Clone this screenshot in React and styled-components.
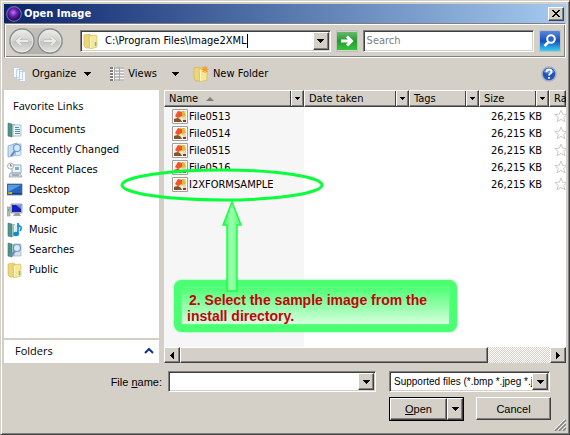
import React from "react";
import styled, { createGlobalStyle, css } from "styled-components";

const face = "#d4d0c8";
const ui = '"DejaVu Sans Condensed", "DejaVu Sans", sans-serif';

const GlobalStyle = createGlobalStyle`
  *, *::before, *::after { box-sizing: border-box; }
  body { margin: 0; background: ${face}; font: 11px/16px ${ui}; color: #000; }
  button, input, select { font: inherit; color: inherit; margin: 0; padding: 0; border: 0; border-radius: 0; background: none; outline: 0; }
  svg { display: block; flex: none; }
  ul { list-style: none; margin: 0; padding: 0; }
`;

const raised = css`
  background: ${face};
  border: 1px solid;
  border-color: #fff #404040 #404040 #fff;
  box-shadow: inset -1px -1px #808080;
`;

const sunken = css`
  background: #fff;
  border: 1px solid;
  border-color: #808080 #fff #fff #808080;
  box-shadow: inset 1px 1px #404040, inset -1px -1px ${face};
`;

const Dialog = styled.div`
  display: flex;
  flex-direction: column;
  min-height: 100vh;
  padding: 3px;
  background: ${face};
  border: 1px solid;
  border-color: ${face} #404040 #404040 ${face};
  box-shadow: inset 1px 1px #fff, inset -1px -1px #808080;
`;

const TitleBar = styled.header`
  display: flex;
  align-items: center;
  height: 19px;
  padding: 0 2px;
  gap: 2px;
  background: linear-gradient(to right, #0a246a, #a6caf0);
`;

const Title = styled.h1`
  flex: 1;
  margin: 0;
  color: #fff;
  font: bold 11px/16px ${ui};
`;

const CloseButton = styled.button`
  ${raised}
  display: grid;
  place-items: center;
  width: 16px;
  height: 14px;
`;

const AddressBar = styled.div`
  display: flex;
  align-items: center;
  gap: 5px;
  height: 35px;
  padding: 0 4px;
  border: 1px solid;
  border-color: #808080 #fff #fff #808080;
  box-shadow: inset 1px 1px #fff, inset -1px -1px #808080;
`;

const Navigation = styled.nav`
  display: flex;
  gap: 2px;
  margin-right: 12px;
  border-radius: 13px;
  background: linear-gradient(#c4c1ba, #b4b1aa);
`;

const RoundButton = styled.button`
  display: block;
  width: 26px;
  height: 26px;
`;

const Combo = styled.div`
  ${sunken}
  display: flex;
  align-items: center;
  flex: ${(p) => p.$grow} 1 0;
  min-width: 0;
  height: ${(p) => p.$height};
  padding: 1px 1px 1px 2px;
`;

const PathInput = styled.input`
  field-sizing: content;
  margin-left: 6px;
  height: 16px;
`;

const Caret = styled.span`
  width: 1px;
  height: 14px;
  background: #000;
`;

const PlainInput = styled.input`
  flex: 1;
  min-width: 0;
  height: 16px;
`;

const Spacer = styled.span`
  flex: 1;
`;

const DropButton = styled.button`
  ${raised}
  display: grid;
  place-items: center;
  flex: none;
  align-self: stretch;
  width: 16px;
`;

const IconButton = styled.button`
  flex: none;
  width: 22px;
  height: 22px;
  display: grid;
  place-items: center;
  border: 1px solid #c0c0bc;
`;

const SearchBox = styled.input`
  ${sunken}
  flex: 165 1 0;
  min-width: 0;
  height: 22px;
  padding: 0 3px;
  &::placeholder { color: #808080; opacity: 1; }
`;

const CommandBar = styled.div`
  display: flex;
  align-items: center;
  height: 32px;
  padding: 0 7px 0 8px;
`;

const Command = styled.button`
  display: flex;
  align-items: center;
  gap: 4px;
  margin-right: ${(p) => p.$after};
`;

const CommandLabel = styled.span`
  margin-right: ${(p) => (p.$wide ? "11px" : "4px")};
`;

const Body = styled.main`
  display: flex;
  flex: 1;
  gap: 5px;
`;

const Sidebar = styled.aside`
  display: flex;
  flex-direction: column;
  gap: 2px;
  width: 155px;
  flex: none;
`;

const Links = styled.nav`
  flex: 1;
  background: #fff;
`;

const LinksTitle = styled.h2`
  margin: 0;
  padding: 8px 9px 5px;
  font: 11px/16px "Open Sans", sans-serif;
`;

const LinkRow = styled.a`
  display: flex;
  align-items: center;
  gap: 6px;
  height: 20px;
  padding: 1px 0 0 3px;
  color: #000;
  text-decoration: none;
`;

const FoldersButton = styled.button`
  display: flex;
  align-items: center;
  justify-content: space-between;
  height: 23px;
  padding: 0 5px 2px 11px;
  background: #fff;
  font: 11px/16px "Open Sans", sans-serif;
`;

const FilePane = styled.section`
  position: relative;
  display: flex;
  flex-direction: column;
  flex: 1;
  min-width: 0;
  background: #fff;
`;

const ListArea = styled.div`
  flex: 1;
  overflow: hidden;
  background: linear-gradient(to right, #f6f6f6 140px, #fff 140px);
`;

const FileTable = styled.table`
  width: 100%;
  table-layout: fixed;
  border-collapse: collapse;
  white-space: nowrap;
  line-height: 15px;
`;

const Col = styled.col`
  width: ${(p) => p.$width};
`;

const HeadCell = styled.th`
  padding: 0;
  height: 17px;
  overflow: hidden;
  font-weight: normal;
  text-align: left;
`;

const HeadInner = styled.div`
  ${raised}
  display: flex;
  align-items: center;
  height: 17px;
  padding-left: 4px;
`;

const SortMark = styled.span`
  margin-left: 8px;
`;

const FilterButton = styled.button`
  display: grid;
  place-items: center;
  width: 13px;
  height: 15px;
  margin-left: auto;
  border-left: 1px solid #404040;
  box-shadow: inset 1px 0 #fff;
`;

const Cell = styled.td`
  height: 17px;
  padding: 1px ${(p) => (p.$right ? "7px" : "0")} 0 0;
  text-align: ${(p) => (p.$right ? "right" : "left")};
  overflow: hidden;
`;

const FileName = styled.div`
  display: flex;
  align-items: center;
  gap: 1px;
  padding-left: 8px;
`;

const Stars = styled.div`
  display: flex;
  padding-left: 5px;
`;

const ScrollBar = styled.div`
  display: flex;
  height: 16px;
  background: repeating-conic-gradient(#fff 0 25%, ${face} 0 50%) 0 0 / 2px 2px;
`;

const ScrollThumb = styled.div`
  ${raised}
  flex: 308 1 0;
`;

const ScrollTrack = styled.div`
  flex: 62 1 0;
`;

const Pointer = styled.svg`
  position: absolute;
  left: -46px;
  top: 75px;
  pointer-events: none;
`;

const Note = styled.p`
  position: absolute;
  left: 10px;
  top: 190px;
  width: 283px;
  margin: 0;
  padding: 12px 8px 8px 13px;
  border-radius: 8px;
  background: #4bff72;
  box-shadow: 0 0 2px #4bff72;
  color: #c80010;
  font: bold 14px/16px "Liberation Sans", Arial, sans-serif;
  text-indent: 2px;
  white-space: nowrap;

  &::before {
    content: "";
    position: absolute;
    inset: 8px;
    background: linear-gradient(#50ff76, #d6ffdd);
    box-shadow: 0 0 2px #8dffa4;
  }
`;

const NoteText = styled.span`
  position: relative;
`;

const Footer = styled.footer`
  display: grid;
  grid-template-columns: 158px 208px 168px;
  column-gap: 6px;
  align-items: center;
  padding: 8px 0 0;
  font: 11px/16px "Liberation Sans", Arial, sans-serif;
`;

const FieldLabel = styled.label`
  justify-self: end;
`;

const TypeBox = styled.div`
  ${sunken}
  display: grid;
  grid-template-columns: 1fr 16px;
  height: 21px;
  margin-left: 7px;
  width: 161px;
  padding: 1px;
  font-size: 10px;
`;

const TypeSelect = styled.select`
  appearance: none;
  grid-row: 1;
  grid-column: 1 / -1;
  min-width: 0;
  padding: 0 16px 0 3px;
  overflow: hidden;
  text-overflow: clip;
`;

const SelectArrow = styled.span`
  ${raised}
  grid-row: 1;
  grid-column: 2;
  display: grid;
  place-items: center;
  pointer-events: none;
`;

const Actions = styled.div`
  grid-column: 3;
  display: flex;
  align-items: flex-start;
  gap: 12px;
  margin: 5px 0 0 7px;
`;

const SplitButton = styled.div`
  display: flex;
  flex: none;
  width: 75px;
  height: 24px;
  border: 1px solid #000;
`;

const PushButton = styled.button`
  ${raised}
  flex: ${(p) => (p.$standalone ? "none" : "1")};
  width: ${(p) => (p.$standalone ? "75px" : "auto")};
  height: ${(p) => (p.$standalone ? "23px" : "22px")};
`;

const GripRow = styled.div`
  display: flex;
  justify-content: flex-end;
  align-items: flex-end;
  height: 10px;
`;

const Down = ({ small }) => (
  <svg width={small ? 5 : 7} height={small ? 3 : 4} viewBox={small ? "1 1 5 3" : "0 0 7 4"} shapeRendering="crispEdges" aria-hidden="true">
    <path d="M0 0h7v1H6v1H5v1H4v1H3V3H2V2H1V1H0z" />
  </svg>
);

const Side = ({ left }) => (
  <svg width="4" height="7" viewBox="0 0 4 7" shapeRendering="crispEdges" aria-hidden="true">
    <path d={left ? "M4 0v7H3V6H2V5H1V4H0V3h1V2h1V1h1V0z" : "M0 0v7h1V6h1V5h1V4h1V3H3V2H2V1H1V0z"} />
  </svg>
);

const NavIcon = ({ forward }) => {
  const arrow = forward ? "M7 13h11M14 9l4 4-4 4" : "M19 13H8M12 9l-4 4 4 4";
  return (
    <svg width="26" height="26" viewBox="0 0 26 26" aria-hidden="true">
      <defs>
        <linearGradient id="disc" x2="0" y2="1">
          <stop offset="0" stopColor="#ececea" />
          <stop offset=".48" stopColor="#d2d2cf" />
          <stop offset=".54" stopColor="#c3c3c0" />
          <stop offset="1" stopColor="#e6e6e2" />
        </linearGradient>
      </defs>
      <circle cx="13" cy="13" r="12" fill="url(#disc)" stroke="#8b8e90" strokeWidth="1.4" />
      <circle cx="13" cy="13" r="10.8" fill="none" stroke="#eee" strokeWidth=".7" />
      <path d={arrow} fill="none" stroke="#bdbdba" strokeWidth="3.4" />
      <path d={arrow} fill="none" stroke="#ebebe9" strokeWidth="2" />
    </svg>
  );
};

const FolderIcon = ({ spark }) => (
  <svg width="16" height="16" viewBox="0 0 16 16" aria-hidden="true">
    <path d="M1 2l5-1 2 1v13H3l-2-2z" fill="#ecd67a" stroke="#cfae49" strokeWidth=".6" />
    <path d="M6 3l7-1 1 1v11l-7 2z" fill="#f7e898" stroke="#d5b44e" strokeWidth=".6" />
    <path d="M7.500 4v11" stroke="#fff6c5" />
    {spark ? (
      <path d="M12 0v7M8.500 3.500h7M9.500 1l5 5M14.500 1l-5 5" stroke="#f39a2c" strokeWidth="1.1" />
    ) : (
      <path d="M12.500 9v4" stroke="#73b6dc" strokeWidth="1.500" />
    )}
  </svg>
);

const Book = () => (
  <>
    <path d="M1 1l4 1v13l-4-1z" fill="#4d958c" stroke="#46706f" strokeWidth=".6" />
    <path d="M5 2h3v12l-3 1z" fill="#9cc2b6" />
  </>
);

const Magnifier = () => (
  <>
    <path d="M8.500 8.500L4 14" stroke="#6d8cb4" strokeWidth="2" />
    <circle cx="10" cy="6" r="3.500" fill="#d6eaff" stroke="#7198c9" strokeWidth="1.200" />
  </>
);

const drawings = {
  documents: (
    <>
      <Book />
      <path d="M6 3h8v11H6z" fill="#eef6fb" stroke="#8ca9ba" strokeWidth=".7" />
      <path d="M8 5.500h4M8 7.500h5M8 9.500h5M8 11.500h5" stroke="#4f91b9" />
    </>
  ),
  changed: (
    <>
      <path d="M1 4l9-3v12l-9 2z" fill="#c6dff5" stroke="#80a8d3" strokeWidth=".8" />
      <path d="M6 2h8v11l-5 1z" fill="#dcebf9" stroke="#94b8df" strokeWidth=".8" />
      <Magnifier />
    </>
  ),
  places: (
    <>
      <path d="M5 3h9v8H5z" fill="#edf5f9" stroke="#9aa9b1" />
      <path d="M3 11h10l2 4H2z" fill="#d4dde1" stroke="#8d999f" strokeWidth=".7" />
      <path d="M8 5h4v3H8z" fill="#7eb2d3" />
      <path d="M5 13h7" stroke="#62839a" />
      <circle cx="3.500" cy="4" r="3" fill="#f2f2f2" stroke="#a0a0a0" strokeWidth=".8" />
      <path d="M3.500 2v2H5" fill="none" stroke="#666" strokeWidth=".8" />
    </>
  ),
  desktop: (
    <>
      <path d="M0 2h15v11H0z" fill="#2465bd" stroke="#52667b" strokeWidth=".7" />
      <path d="M1 3h13L1 10z" fill="#5c9ae0" />
      <path d="M1 11h13v1H1z" fill="#183c69" />
      <path d="M1 10h2v2H1z" fill="#7cb831" />
      <path d="M3 10h2v2H3z" fill="#f6a42c" />
    </>
  ),
  computer: (
    <>
      <path d="M4 2h11v9H4z" fill="#c8cbd0" stroke="#777e88" strokeWidth=".7" />
      <path d="M5 3h9v7H5z" fill="#1720b8" />
      <path d="M9 3h5v4z" fill="#7086ee" />
      <path d="M8 11h4l2 3H6z" fill="#9ca1a8" />
      <path d="M0 5h3v9H0z" fill="#b7bec3" stroke="#838b90" strokeWidth=".6" />
      <path d="M1 7h1v2H1z" fill="#53b34a" />
    </>
  ),
  music: (
    <>
      <Book />
      <path d="M7 3h6v11H7z" fill="#d9edf4" />
      <ellipse cx="9" cy="12" rx="2.800" ry="2.200" fill="#1688cc" />
      <path d="M11 12V1q0 3 3 4 1 2-1 4" fill="none" stroke="#1688cc" strokeWidth="1.600" />
    </>
  ),
  searches: (
    <>
      <Book />
      <path d="M7 2h7v12H7z" fill="#d2e2ea" stroke="#8fa5b1" strokeWidth=".6" />
      <Magnifier />
    </>
  ),
};

const LinkIcon = ({ kind }) =>
  kind === "public" ? (
    <FolderIcon />
  ) : (
    <svg width="16" height="16" viewBox="0 0 16 16" aria-hidden="true">{drawings[kind]}</svg>
  );

const PictureIcon = () => (
  <svg width="16" height="15" viewBox="0 0 16 15" aria-hidden="true">
    <path d="M.5.5h15v14H.5z" fill="#fff" stroke="#a0a0a0" />
    <path d="M2 2h12v11H2z" fill="#efd8a0" />
    <path d="M2 2h6v4L2 10z" fill="#f7efe2" />
    <path d="M3 7l3-5 4 1v4L6 9z" fill="#f4512c" />
    <path d="M10 2h2l2 5-4 1z" fill="#d8bb36" />
    <path d="M2 10l4-1 3 2 2 2H2z" fill="#82552d" />
    <path d="M8 8l2 1 3 3v1h-3z" fill="#e9f2e3" />
    <path d="M11 11h3v2h-3z" fill="#a62b21" />
  </svg>
);

const Star = () => (
  <svg width="14" height="14" viewBox="0 0 14 14" aria-hidden="true">
    <path d="M7 1l1.700 4.200 4.500.3-3.500 2.900 1.200 4.400L7 10.400l-3.900 2.400 1.200-4.400L.8 5.500l4.500-.3z" fill="#fff" stroke="#c8c8c8" />
  </svg>
);

const Callout = () => (
  <>
    <Note>
      <NoteText>
        2. Select the sample image from the
        <br />
        install directory.
      </NoteText>
    </Note>
    <Pointer width="210" height="135" viewBox="0 0 210 135" aria-hidden="true">
      <defs>
        <linearGradient id="shaft">
          <stop offset="0" stopColor="#35f45c" />
          <stop offset=".45" stopColor="#a0ffb0" />
          <stop offset="1" stopColor="#4ff870" />
        </linearGradient>
      </defs>
      <ellipse cx="104" cy="20" rx="100" ry="15" fill="none" stroke="#08ff3c" strokeWidth="3" />
      <path d="M114 37l9 23h-4v66h-10V60h-4z" fill="url(#shaft)" stroke="#1cff46" strokeWidth="1.500" />
    </Pointer>
  </>
);

const links = [
  ["documents", "Documents"],
  ["changed", "Recently Changed"],
  ["places", "Recent Places"],
  ["desktop", "Desktop"],
  ["computer", "Computer"],
  ["music", "Music"],
  ["searches", "Searches"],
  ["public", "Public"],
];

const columns = [
  ["Name", "140px"],
  ["Date taken", "105px"],
  ["Tags", "70px"],
  ["Size", "70px"],
  ["Rating", "auto"],
];

const files = ["File0513", "File0514", "File0515", "File0516", "I2XFORMSAMPLE"];

export default function App() {
  return (
    <>
      <GlobalStyle />
      <Dialog role="dialog" aria-labelledby="title">
        <TitleBar>
          <svg width="16" height="16" viewBox="0 0 16 16" aria-hidden="true">
            <defs>
              <radialGradient id="orb" cx=".45" cy=".4">
                <stop offset="0" stopColor="#c77af0" />
                <stop offset=".5" stopColor="#6a22b4" />
                <stop offset="1" stopColor="#2a0f5c" />
              </radialGradient>
            </defs>
            <circle cx="8" cy="8" r="7.300" fill="url(#orb)" stroke="#6d66a0" strokeWidth="1.200" />
          </svg>
          <Title id="title">Open Image</Title>
          <CloseButton aria-label="Close">
            <svg width="8" height="7" viewBox="0 0 8 7" shapeRendering="crispEdges" aria-hidden="true">
              <path d="M0 0h2v1h1v1h2V1h1V0h2v1H7v1H6v1H5v1h1v1h1v1h1v1H6V6H5V5H3v1H2v1H0V6h1V5h1V4h1V3H2V2H1V1H0z" />
            </svg>
          </CloseButton>
        </TitleBar>

        <AddressBar>
          <Navigation aria-label="History">
            <RoundButton aria-label="Back"><NavIcon /></RoundButton>
            <RoundButton aria-label="Forward"><NavIcon forward /></RoundButton>
          </Navigation>
          <Combo $grow={248} $height="22px">
            <FolderIcon />
            <PathInput aria-label="Address" defaultValue="C:\Program Files\Image2XML" />
            <Caret />
            <Spacer />
            <DropButton aria-label="Previous locations"><Down /></DropButton>
          </Combo>
          <IconButton aria-label="Go">
            <svg width="20" height="18" viewBox="0 0 20 18" aria-hidden="true">
              <defs>
                <linearGradient id="go" x2="0" y2="1">
                  <stop offset="0" stopColor="#69b96b" />
                  <stop offset=".5" stopColor="#249a30" />
                  <stop offset="1" stopColor="#35c43c" />
                </linearGradient>
              </defs>
              <path d="M0 0h20v18H0z" fill="url(#go)" />
              <path d="M4 9h10M10 4.500L14.500 9 10 13.500" fill="none" stroke="#fff" strokeWidth="3" />
            </svg>
          </IconButton>
          <SearchBox type="search" aria-label="Search" placeholder="Search" />
          <IconButton aria-label="Run search">
            <svg width="20" height="20" viewBox="0 0 20 20" aria-hidden="true">
              <defs>
                <linearGradient id="find" x2="0" y2="1">
                  <stop offset="0" stopColor="#5b86dc" />
                  <stop offset=".5" stopColor="#1450c0" />
                  <stop offset="1" stopColor="#39d0f4" />
                </linearGradient>
              </defs>
              <rect width="20" height="20" rx="1" fill="url(#find)" />
              <path d="M8.500 11l-4 4" stroke="#fff" strokeWidth="2.500" />
              <circle cx="11" cy="8" r="3.800" fill="#2463ca" stroke="#fff" strokeWidth="2" />
            </svg>
          </IconButton>
        </AddressBar>

        <CommandBar role="toolbar" aria-label="Commands">
          <Command $after="19px">
            <svg width="16" height="16" viewBox="0 0 16 16" aria-hidden="true">
              <path d="M1.500 1.500h6v10h-6zM4.500 3.500h6v10h-6zM7.500 5.500h6v10h-6z" fill="#f7fbff" stroke="#b4cae0" strokeWidth=".8" />
            </svg>
            <CommandLabel>Organize</CommandLabel>
            <Down />
          </Command>
          <Command $after="14px">
            <svg width="14" height="16" viewBox="0 0 14 16" aria-hidden="true">
              <path d="M0 1h14v14H0z" fill="#f7f7f5" />
              <path d="M4.500 1v14M9.500 1v14" stroke="#aaa" />
              <path d="M0 2h3M0 5h3M0 8h3M0 11h3M0 14h3" stroke="#555" strokeWidth="1.500" />
              <path d="M5 2h4M5 5h4M5 8h4M5 11h4M5 14h4M10 2h4M10 5h4M10 8h4M10 11h4M10 14h4" stroke="#888" />
            </svg>
            <CommandLabel $wide>Views</CommandLabel>
            <Down />
          </Command>
          <Command $after="auto">
            <FolderIcon spark />
            <CommandLabel>New Folder</CommandLabel>
          </Command>
          <RoundButton aria-label="Help">
            <svg width="26" height="26" viewBox="0 0 26 26" aria-hidden="true">
              <circle cx="16" cy="13" r="7" fill="#2454b8" stroke="#a3afc6" strokeWidth="1.500" />
              <path d="M10.500 11a6 5 0 0 1 11 0q-5 3-11 0" fill="#6b92dd" />
              <path d="M13.500 11q0-2.500 2.500-2.500t2.500 2.300q0 1.200-1.300 1.900T16 14.500M16 16v1.800" fill="none" stroke="#fff" strokeWidth="1.800" />
            </svg>
          </RoundButton>
        </CommandBar>

        <Body>
          <Sidebar>
            <Links aria-labelledby="favorites">
              <LinksTitle id="favorites">Favorite Links</LinksTitle>
              <ul>
                {links.map(([kind, label]) => (
                  <li key={kind}>
                    <LinkRow href={`#${kind}`}><LinkIcon kind={kind} />{label}</LinkRow>
                  </li>
                ))}
              </ul>
            </Links>
            <FoldersButton>
              Folders
              <svg width="10" height="6" viewBox="0 0 10 6" aria-hidden="true">
                <path d="M1 5l4-4 4 4" fill="none" stroke="#0a3190" strokeWidth="2" />
              </svg>
            </FoldersButton>
          </Sidebar>

          <FilePane>
            <ListArea>
              <FileTable>
                <colgroup>
                  {columns.map(([name, width]) => <Col key={name} $width={width} />)}
                </colgroup>
                <thead>
                  <tr>
                    {columns.map(([name]) => (
                      <HeadCell key={name} scope="col">
                        <HeadInner>
                          {name}
                          {name === "Name" && (
                            <SortMark>
                              <svg width="8" height="4" viewBox="0 0 8 4" aria-hidden="true">
                                <path d="M0 4l4-4 4 4z" fill="#808080" />
                              </svg>
                            </SortMark>
                          )}
                          {name !== "Rating" && (
                            <FilterButton aria-label={`Filter ${name}`}><Down small /></FilterButton>
                          )}
                        </HeadInner>
                      </HeadCell>
                    ))}
                  </tr>
                </thead>
                <tbody>
                  {files.map((file) => (
                    <tr key={file}>
                      <Cell><FileName><PictureIcon />{file}</FileName></Cell>
                      <Cell />
                      <Cell />
                      <Cell $right>26,215 KB</Cell>
                      <Cell><Stars><Star /></Stars></Cell>
                    </tr>
                  ))}
                </tbody>
              </FileTable>
            </ListArea>
            <ScrollBar>
              <DropButton aria-label="Scroll left"><Side left /></DropButton>
              <ScrollThumb />
              <ScrollTrack />
              <DropButton aria-label="Scroll right"><Side /></DropButton>
            </ScrollBar>
            <Callout />
          </FilePane>
        </Body>

        <Footer>
          <FieldLabel htmlFor="filename">File <u>n</u>ame:</FieldLabel>
          <Combo $grow={1} $height="21px">
            <PlainInput id="filename" />
            <DropButton aria-label="Recent file names"><Down /></DropButton>
          </Combo>
          <TypeBox>
            <TypeSelect aria-label="File type">
              <option>Supported files (*.bmp *.jpeg *.jpg)</option>
            </TypeSelect>
            <SelectArrow aria-hidden="true"><Down /></SelectArrow>
          </TypeBox>
          <Actions>
            <SplitButton>
              <PushButton><u>O</u>pen</PushButton>
              <DropButton aria-label="Open options"><Down /></DropButton>
            </SplitButton>
            <PushButton $standalone>Cancel</PushButton>
          </Actions>
        </Footer>
        <GripRow>
          <svg width="12" height="12" viewBox="0 0 12 12" aria-hidden="true">
            <path d="M1 12L12 1M5 12l7-7M9 12l3-3" stroke="#808080" strokeWidth="1.500" />
            <path d="M0 11L11 0M4 11l8-8M8 11l4-4" stroke="#fff" strokeWidth=".8" />
          </svg>
        </GripRow>
      </Dialog>
    </>
  );
}
